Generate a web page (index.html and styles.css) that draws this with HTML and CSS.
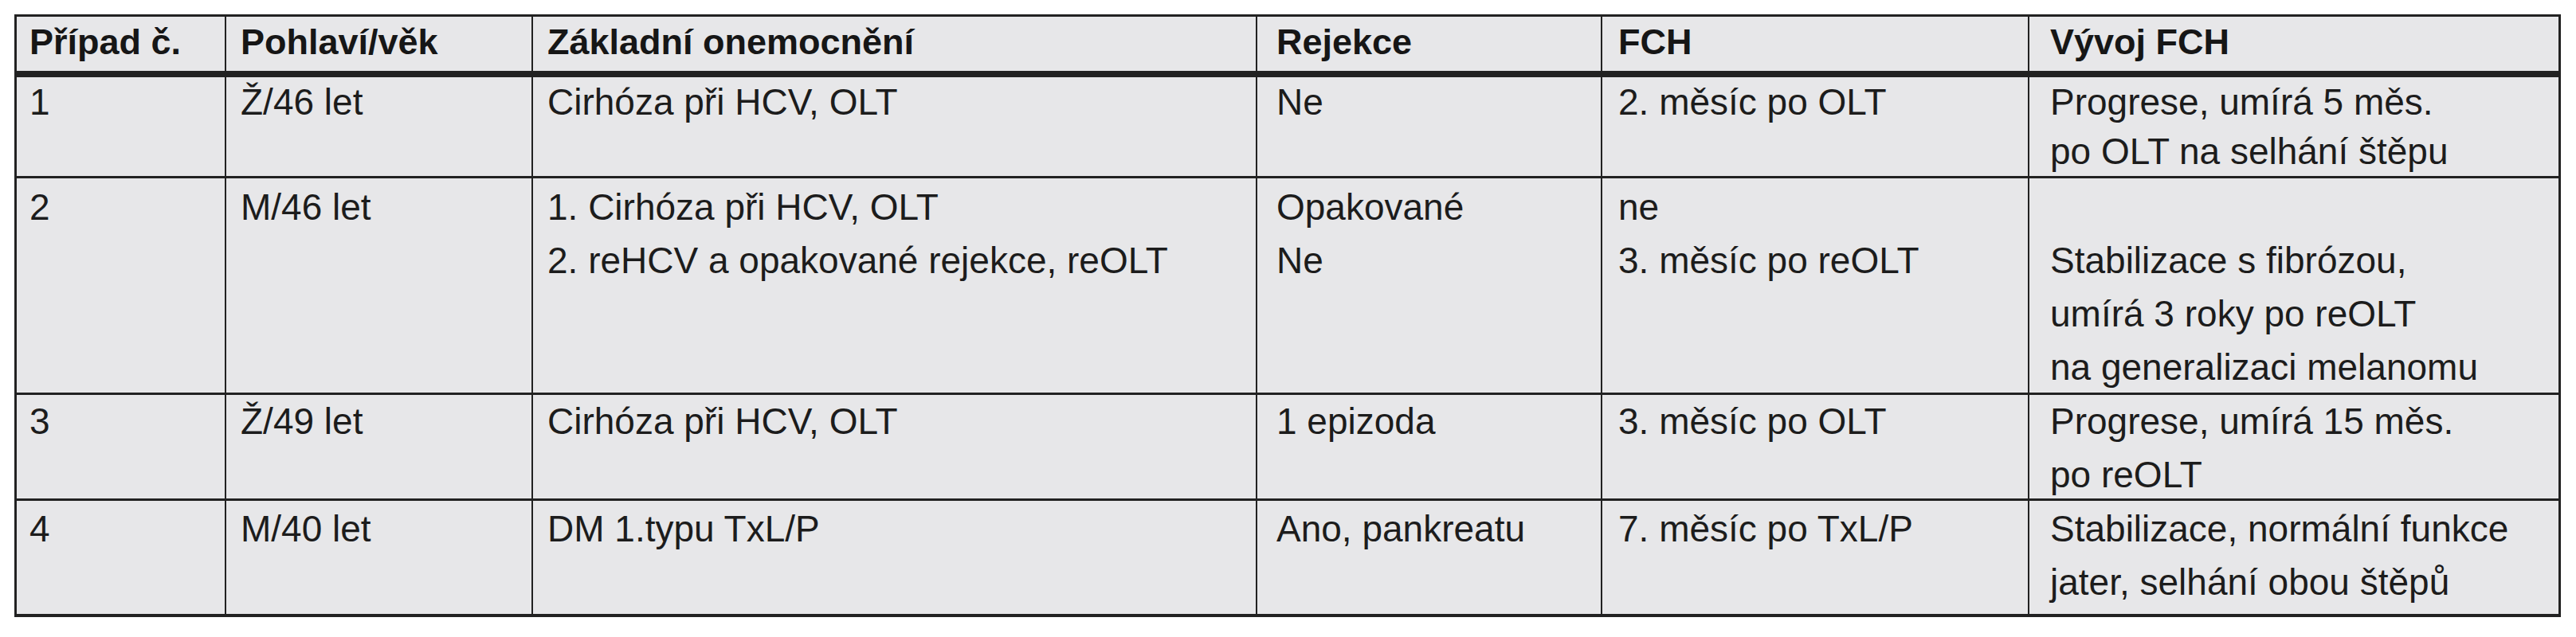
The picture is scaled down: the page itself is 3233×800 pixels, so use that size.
FILE: index.html
```html
<!DOCTYPE html>
<html lang="cs">
<head>
<meta charset="utf-8">
<title>Případy FCH</title>
<link rel="stylesheet" href="styles.css">
</head>
<body>
<div class="table">
  <div class="cell th">Případ č.</div>
  <div class="cell th">Pohlaví/věk</div>
  <div class="cell th">Základní onemocnění</div>
  <div class="cell th">Rejekce</div>
  <div class="cell th">FCH</div>
  <div class="cell th">Vývoj FCH</div>

  <div class="cell r1">1</div>
  <div class="cell r1">Ž/46 let</div>
  <div class="cell r1">Cirhóza při HCV, OLT</div>
  <div class="cell r1">Ne</div>
  <div class="cell r1">2. měsíc po OLT</div>
  <div class="cell r1">Progrese, umírá 5 měs.<br>po OLT na selhání štěpu</div>

  <div class="cell r2">2</div>
  <div class="cell r2">M/46 let</div>
  <div class="cell r2">1. Cirhóza při HCV, OLT<br>2. reHCV a opakované rejekce, reOLT</div>
  <div class="cell r2">Opakované<br>Ne</div>
  <div class="cell r2">ne<br>3. měsíc po reOLT</div>
  <div class="cell r2"><br>Stabilizace s fibrózou,<br>umírá 3 roky po reOLT<br>na generalizaci melanomu</div>

  <div class="cell r3">3</div>
  <div class="cell r3">Ž/49 let</div>
  <div class="cell r3">Cirhóza při HCV, OLT</div>
  <div class="cell r3">1 epizoda</div>
  <div class="cell r3">3. měsíc po OLT</div>
  <div class="cell r3">Progrese, umírá 15 měs.<br>po reOLT</div>

  <div class="cell r4">4</div>
  <div class="cell r4">M/40 let</div>
  <div class="cell r4">DM 1.typu TxL/P</div>
  <div class="cell r4">Ano, pankreatu</div>
  <div class="cell r4">7. měsíc po TxL/P</div>
  <div class="cell r4">Stabilizace, normální funkce<br>jater, selhání obou štěpů</div>
</div>
</body>
</html>
```

FILE: styles.css
```css
html, body {
  margin: 0;
  padding: 0;
  background: #ffffff;
}

body {
  font-family: "Liberation Sans", Arial, sans-serif;
  color: #1c1c1c;
}

.table {
  display: grid;
  grid-template-columns: 263px 385px 909px 433px 536px 664px;
  grid-template-rows: 76px 127px 272px 133px 142px;
  width: max-content;
  margin: 18px 0 0 18px;
  border: 3px solid #222222;
  border-bottom-width: 4px;
  background: #e7e7e9;
}

.cell {
  box-sizing: border-box;
  border-right: 2px solid #222222;
  border-bottom: 3px solid #222222;
  font-size: 46px;
  line-height: 67px;
  padding-left: 20px;
  white-space: nowrap;
}

.cell:nth-child(6n+1) { padding-left: 16px; }
.cell:nth-child(6n+2) { padding-left: 18px; }
.cell:nth-child(6n+3) { padding-left: 18px; }
.cell:nth-child(6n+4) { padding-left: 24px; }
.cell:nth-child(6n+5) { padding-left: 20px; }
.cell:nth-child(6n) {
  padding-left: 26px;
  border-right: 0;
}

.th {
  font-weight: 700;
  font-size: 45px;
  line-height: 63px;
  border-bottom-width: 8px;
  color: #161616;
}

.r1 {
  line-height: 62px;
}

.r2 {
  padding-top: 3px;
}

.r4 {
  padding-top: 2px;
  border-bottom: 0;
}
```
